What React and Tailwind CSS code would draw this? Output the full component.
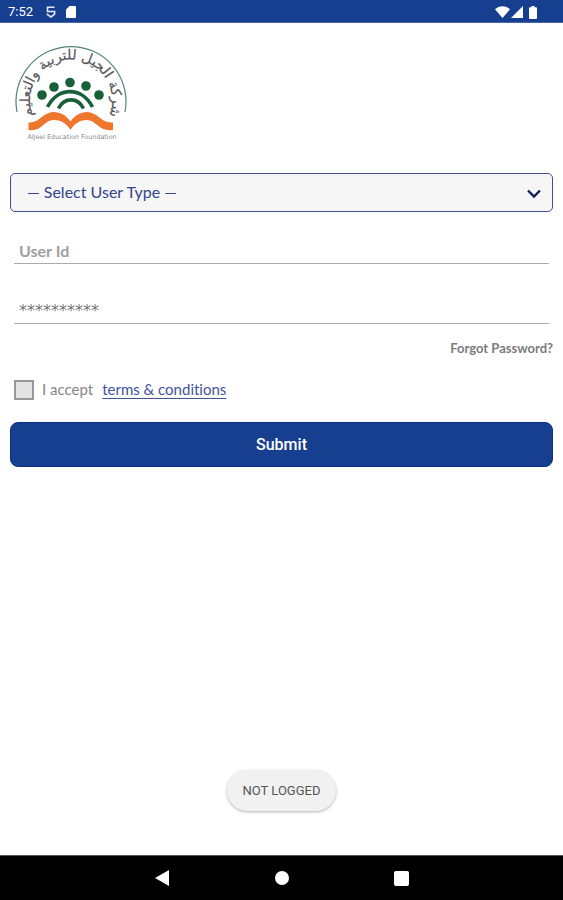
import React from "react";

function StatusBar() {
  return (
    <header className="flex h-[23px] items-center border-b border-[#4a67a8] bg-[#173f8f] pl-2 pr-[26px] pt-[2px] text-white">
      <span className="font-[Roboto,sans-serif] text-[13px] leading-5">7:52</span>
      <svg className="ml-[13px] h-3 w-[10px]" viewBox="0 0 10 12" fill="none" stroke="#e4e9f7" strokeWidth="1.6" aria-hidden="true">
        <path d="M8.500 1.200H1.500V5.500H8.600V8L5 10.900 1.500 8.600V7.400" />
      </svg>
      <svg className="ml-[10px] h-3 w-[10px]" viewBox="0 0 10 12" fill="#fff" aria-hidden="true">
        <path d="M3.6 0H9a1 1 0 0 1 1 1v10a1 1 0 0 1-1 1H1a1 1 0 0 1-1-1V3.6Z" />
      </svg>
      <svg className="ml-auto h-3 w-[15px]" viewBox="0 0 15 12" fill="#fff" aria-hidden="true">
        <path d="M0 3.2C4.2-.7 10.800-.7 15 3.200L7.500 12Z" />
      </svg>
      <svg className="ml-px h-3 w-3" viewBox="0 0 12 12" fill="#fff" aria-hidden="true">
        <path d="M12 0V12H0Z" />
      </svg>
      <svg className="ml-[6px] h-[13px] w-2" viewBox="0 0 8 13" fill="#fff" aria-hidden="true">
        <path d="M2.500 0h3v1.300H7a1 1 0 0 1 1 1V12a1 1 0 0 1-1 1H1a1 1 0 0 1-1-1V2.300a1 1 0 0 1 1-1h1.500Z" />
      </svg>
    </header>
  );
}

function Logo() {
  return (
    <svg className="h-[100px] w-[114px]" viewBox="14 43 114 100" role="img" aria-label="AlJeel Education Foundation">
      <path d="M17 112A55 55 0 1 1 125 112" fill="none" stroke="#52837a" strokeWidth="1.200" />
      <path id="logo-arc" d="M35.500 121A41 41 0 1 1 106.500 121" fill="none" />
      <text fill="#59595b" stroke="#59595b" strokeWidth="0.200" fontSize="14" fontFamily="'DejaVu Sans', sans-serif" textAnchor="middle">
        <textPath href="#logo-arc" startOffset="50%">شركة الجيل للتربية والتعليم</textPath>
      </text>
      <g fill="#176039">
        <circle cx="42" cy="95" r="4.800" />
        <circle cx="54" cy="87" r="4.800" />
        <circle cx="70" cy="82.500" r="4.800" />
        <circle cx="86" cy="86" r="4.800" />
        <circle cx="99" cy="95" r="4.800" />
      </g>
      <g fill="none" stroke="#176039" strokeWidth="3.600">
        <path d="M47.500 107C58 86.500 82 86.500 92.500 107" />
        <path d="M58.500 108.500C64 97 78 97 83.500 108.500" />
      </g>
      <path d="M28.500 122.500C39 123.500 43 112 53.500 112C61 112 66 115.500 70.500 121.500C75 115.500 80 112 87 112C98 112 101 123.500 113 122.500V130C99 132 96 120 87 120C80 120 75 123 70.500 130C66 123 61 120 53.500 120C44 120 42 132 28.500 130Z" fill="#ef762d" />
      <text x="72" y="139" fill="#8b8b8b" fontSize="6.400" fontFamily="'DejaVu Sans', sans-serif" textAnchor="middle">AlJeel Education Foundation</text>
    </svg>
  );
}

function LoginForm() {
  return (
    <form className="flex flex-col [font-variant-ligatures:none]" onSubmit={(e) => e.preventDefault()}>
      <div className="relative mt-[30px]">
        <select aria-label="User type" className="block h-[39px] w-full appearance-none rounded-[5px] border border-[#3f4f96] bg-[#f6f6f7] pb-px pl-4 pr-10 text-base text-[#34458a]">
          <option>— Select User Type —</option>
        </select>
        <svg className="pointer-events-none absolute right-3 top-4 h-[10px] w-[14px]" viewBox="0 0 14 10" fill="none" stroke="#101f5c" strokeWidth="2.400" aria-hidden="true">
          <path d="M1 1.500 7 7.500 13 1.500" />
        </svg>
      </div>
      <input aria-label="User Id" placeholder="User Id" className="mx-1 mt-[26px] h-[26px] border-b border-[#aaa] px-[5px] text-base font-bold outline-none placeholder:text-[#a0a0a0] placeholder:opacity-100" />
      <input aria-label="Password" type="password" placeholder="**********" className="mx-1 mt-[33px] h-[27px] border-b border-[#aaa] px-[5px] font-['DejaVu_Sans',sans-serif] text-base outline-none placeholder:text-[#777] placeholder:opacity-100" />
      <a href="#forgot" className="mt-[14px] self-end text-[13px] font-bold leading-5 text-[#7c7c7c]">Forgot Password?</a>
      <div className="ml-1 mt-[22px] flex h-5 items-start text-[15px] leading-[18px] text-[#858585]">
        <input id="accept" type="checkbox" className="size-5 appearance-none border-2 border-[#999] bg-[#e4e4e4]" />
        <label htmlFor="accept" className="ml-2">I accept</label>
        <a href="#terms" className="ml-[9px] text-[#42529d] underline underline-offset-3">terms &amp; conditions</a>
      </div>
      <button type="submit" className="mt-[22px] h-[45px] rounded-lg border border-[#0d2f86] bg-[#173f8f] font-[Roboto,sans-serif] text-base font-medium text-white">Submit</button>
    </form>
  );
}

function NavigationBar() {
  return (
    <nav className="flex h-[45px] items-center justify-center gap-[98px] border-t border-[#555] bg-black text-white">
      <button type="button" aria-label="Back" className="flex h-6 w-[22px] items-center justify-center">
        <svg className="h-4 w-[14px]" viewBox="0 0 14 16" fill="currentColor"><path d="M14 0V16L0 8Z" /></svg>
      </button>
      <button type="button" aria-label="Home" className="flex h-6 w-[22px] items-center justify-center">
        <span className="size-[14px] rounded-full bg-white" />
      </button>
      <button type="button" aria-label="Recent apps" className="flex h-6 w-[22px] items-center justify-center">
        <span className="size-[15px] rounded-[2px] bg-white" />
      </button>
    </nav>
  );
}

export default function App() {
  return (
    <div className="flex min-h-screen flex-col bg-white font-[Lato,sans-serif]">
      <StatusBar />
      <main className="flex flex-1 flex-col px-[10px] pt-5">
        <div className="flex pl-1"><Logo /></div>
        <LoginForm />
        <div role="status" className="mb-11 mt-auto flex h-[41px] items-center self-center rounded-full bg-[#f1f1f2] px-4 font-[Roboto,sans-serif] text-[13px] text-[#555] shadow-[0_1px_3px_rgba(0,0,0,0.3)]">NOT LOGGED</div>
      </main>
      <NavigationBar />
    </div>
  );
}
